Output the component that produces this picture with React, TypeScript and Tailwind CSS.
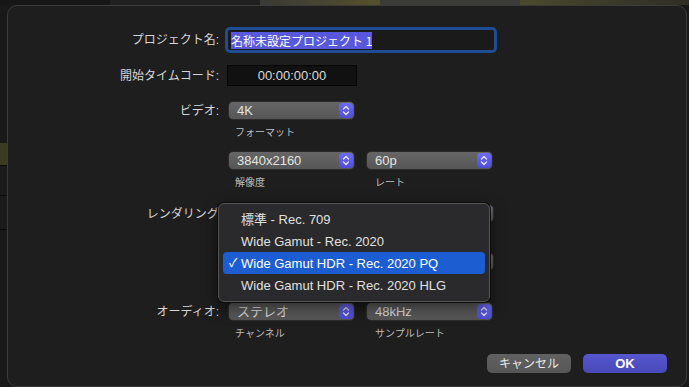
import React from 'react';

const FONT = { fontFamily: '"Liberation Sans", "Noto Sans CJK JP", sans-serif' };

function Stepper() {
  return (
    <span className="flex h-[15px] w-[14px] items-center justify-center rounded-[4px] bg-gradient-to-b from-[#6c6cf8] to-[#4d4dd9]">
      <svg width="8" height="11" viewBox="0 0 8 11" fill="none" stroke="#e8e8ff" strokeWidth="1.3" strokeLinecap="round" strokeLinejoin="round">
        <path d="M1.5 4 L4 1.5 L6.5 4" />
        <path d="M1.5 7 L4 9.5 L6.5 7" />
      </svg>
    </span>
  );
}

function Popup({ value, wide = false }: { value: string; wide?: boolean }) {
  return (
    <div
      className={`flex h-[19px] items-center rounded-[5px] border border-[#2c2c2c] bg-gradient-to-b from-[#666666] to-[#565656] pl-[8px] pr-[1px] ${wide ? 'w-[266px]' : 'w-[127px]'}`}
    >
      <span className="flex-1 text-[13px] leading-none text-[#e4e4e4]">{value}</span>
      <Stepper />
    </div>
  );
}

function Label({ text, width = 'w-[211px]' }: { text: string; width?: string }) {
  return (
    <div className={`${width} shrink-0 text-right text-[12px] leading-none text-[#d6d6d6]`}>{text}</div>
  );
}

function Caption({ left, right }: { left?: string; right?: string }) {
  return (
    <div className="mt-[5px] flex h-[14px] items-center pl-[227px] text-[10px] text-[#bdbdbd]">
      <span className="w-[140px]">{left}</span>
      {right && <span>{right}</span>}
    </div>
  );
}

const MENU_ITEMS = [
  '標準 - Rec. 709',
  'Wide Gamut - Rec. 2020',
  'Wide Gamut HDR - Rec. 2020 PQ',
  'Wide Gamut HDR - Rec. 2020 HLG',
];

export default function App() {
  return (
    <div className="h-[387px] w-[689px] overflow-hidden bg-[#181818]" style={FONT}>
      {/* fondo detrás del diálogo */}
      <div className="flex h-[5px]">
        <div className="w-[110px] bg-[#161616]" />
        <div className="w-[150px] bg-[#202020]" />
        <div className="w-[120px] bg-gradient-to-r from-[#3a3a36] to-[#55502a]" />
        <div className="w-[140px] bg-[#3b3b38]" />
        <div className="flex-1 bg-gradient-to-r from-[#4a4a2c] to-[#2e2e26]" />
      </div>
      <div className="flex">
        <div className="flex w-[7px] flex-col">
          <div className="h-[138px] bg-[#191919]" />
          <div className="h-[22px] bg-[#3b3a22]" />
          <div className="h-[30px] border-t border-[#0a0a0a] bg-[#1b1b1b]" />
          <div className="h-[34px] border-t border-[#0a0a0a] bg-[#1b1b1b]" />
          <div className="h-[160px] border-t border-[#0a0a0a] bg-[#191919]" />
        </div>
        <div className="relative h-[382px] w-[680px] rounded-[10px] border border-[#3b3b3b] bg-[#1e1e1e]">
          <div className="flex flex-col">
            {/* nombre del proyecto */}
            <div className="mt-[24px] flex h-[20px] items-center">
              <Label text="プロジェクト名:" />
              <div className="ml-[9px] flex h-[20px] w-[266px] items-center rounded-[2px] bg-[#1a1a1a] pl-[3px] outline outline-[3px] outline-[#1f4c92]">
                <span className="bg-[#5858dc] text-[12px] leading-[17px] text-white" style={{ fontFamily: '"Noto Sans CJK JP", sans-serif' }}>
                  名称未設定プロジェクト 1
                </span>
              </div>
            </div>

            {/* timecode */}
            <div className="mt-[15px] flex h-[21px] items-center">
              <Label text="開始タイムコード:" />
              <div className="ml-[8px] flex h-[21px] w-[130px] items-center justify-center border border-[#050505] bg-[#111111] text-[13px] text-[#dcdcdc]">
                00:00:00:00
              </div>
            </div>

            {/* video */}
            <div className="mt-[15px] flex h-[19px] items-center">
              <Label text="ビデオ:" />
              <div className="ml-[9px]">
                <Popup value="4K" />
              </div>
            </div>
            <Caption left="フォーマット" />

            <div className="mt-[12px] flex h-[19px] items-center">
              <div className="w-[211px]" />
              <div className="ml-[9px] flex gap-[11px]">
                <Popup value="3840x2160" />
                <Popup value="60p" />
              </div>
            </div>
            <Caption left="解像度" right="レート" />

            {/* rendering: los controles quedan tapados por el menú */}
            <div className="mt-[15px] flex h-[19px] items-center">
              <Label text="レンダリング:" width="w-[214px]" />
              <div className="ml-[6px]">
                <Popup value="" wide />
              </div>
            </div>
            <Caption />
            <div className="mt-[10px] flex h-[19px] items-center">
              <div className="w-[211px]" />
              <div className="ml-[9px]">
                <Popup value="" wide />
              </div>
            </div>
            <Caption />

            {/* audio */}
            <div className="mt-[12px] flex h-[19px] items-center">
              <Label text="オーディオ:" />
              <div className="ml-[9px] flex gap-[11px]">
                <Popup value="ステレオ" />
                <Popup value="48kHz" />
              </div>
            </div>
            <Caption left="チャンネル" right="サンプルレート" />

            {/* botones */}
            <div className="mt-[14px] flex h-[19px] justify-end gap-[12px] pr-[19px]">
              <button className="h-[19px] w-[84px] rounded-[5px] bg-gradient-to-b from-[#616161] to-[#565656] text-[12px] leading-none text-[#e8e8e8]">
                キャンセル
              </button>
              <button className="h-[19px] w-[84px] rounded-[5px] bg-gradient-to-b from-[#5656cf] to-[#4848b8] text-[13px] font-bold leading-none text-white">
                OK
              </button>
            </div>
          </div>

          {/* menú desplegable */}
          <div className="absolute left-[210px] top-[197px] w-[272px] rounded-[6px] border border-[#555555] bg-[#2a2a2c] px-[4px] pb-[5px] pt-[4px] shadow-[0_0_0_1px_#0c0c0c,0_6px_16px_rgba(0,0,0,0.6)]">
            {MENU_ITEMS.map((item, i) => {
              const selected = i === 2;
              return (
                <div
                  key={item}
                  className={`flex h-[22px] items-center rounded-[4px] text-[13px] leading-none ${selected ? 'bg-[#1c5ed2] text-white' : 'text-[#e0e0e0]'}`}
                >
                  <span className="w-[18px] pl-[6px] text-[12px]">{selected ? '✓' : ''}</span>
                  <span>{item}</span>
                </div>
              );
            })}
          </div>
        </div>
      </div>
    </div>
  );
}
